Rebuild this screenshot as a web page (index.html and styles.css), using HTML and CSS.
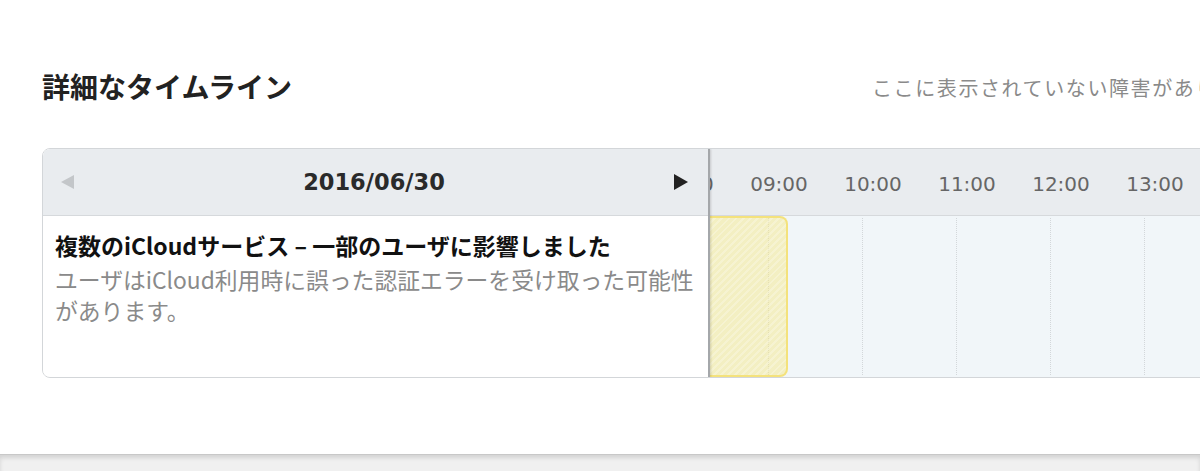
FILE: index.html
```html
<!DOCTYPE html>
<html lang="ja">
<head>
  <meta charset="UTF-8">
  <title>詳細なタイムライン</title>
  <link rel="stylesheet" href="styles.css">
</head>
<body>

  <div class="page">
    <div class="title-row">
      <h1>詳細なタイムライン</h1>
      <p class="note">ここに表示されていない障害がありますか？</p>
    </div>

    <div class="timeline-card">
      <div class="side">
        <div class="side-head">
          <svg class="nav prev" width="13" height="14" viewBox="0 0 13 14"><path d="M13 0 L13 14 L0 7 Z"/></svg>
          <span class="date">2016/06/30</span>
          <svg class="nav next" width="14" height="16" viewBox="0 0 14 16"><path d="M0 0 L0 16 L14 8 Z"/></svg>
        </div>
        <div class="event">
          <h3>複数のiCloudサービス – 一部のユーザに影響しました</h3>
          <p>ユーザはiCloud利用時に誤った認証エラーを受け取った可能性があります。</p>
        </div>
      </div>

      <div class="hours">
        <div class="hours-head">
          <span>08:00</span>
          <span>09:00</span>
          <span>10:00</span>
          <span>11:00</span>
          <span>12:00</span>
          <span>13:00</span>
          <span>14:00</span>
        </div>
        <div class="hours-body">
          <div class="slot first"></div>
          <div class="slot"></div>
          <div class="slot"></div>
          <div class="slot"></div>
          <div class="slot"></div>
          <div class="slot"></div>
          <div class="outage"></div>
        </div>
      </div>
    </div>
  </div>

  <div class="footer"></div>

</body>
</html>
```

FILE: styles.css
```css
html, body {
  margin: 0;
  overflow: hidden;
}

body {
  font-family: "Noto Sans CJK JP", "Noto Sans", sans-serif;
  background-color: #f0f0f0;
  color: #222;
}

.page {
  background-color: #fff;
  height: 454px;
  width: 1500px;
  padding: 66px 0 0 42px;
  box-sizing: border-box;
}

.title-row {
  display: grid;
  grid-template-columns: 830px auto;
  align-items: center;
  height: 40px;
  margin-bottom: 42px;
}

h1 {
  margin: 0;
  font-size: 28px;
  font-weight: bold;
  line-height: 40px;
  color: #222;
}

.note {
  margin: 3px 0 0 0;
  font-size: 20px;
  letter-spacing: 1.6px;
  color: #8a8a8a;
  white-space: nowrap;
}

.timeline-card {
  display: flex;
  width: 1400px;
  height: 228px;
  border: 1px solid #d3d6d9;
  border-radius: 8px;
  overflow: hidden;
}

.side {
  width: 665px;
  flex-shrink: 0;
  border-right: 2px solid #a4a7aa;
  box-shadow: 1px 0 2px rgba(0, 0, 0, 0.15);
  position: relative;
  z-index: 1;
  background-color: #fff;
}

.side-head {
  height: 66px;
  background-color: #e9ecef;
  border-bottom: 1px solid #d6d9dc;
  display: flex;
  align-items: center;
  justify-content: space-between;
  padding: 0 20px 0 18px;
}

.nav.prev {
  fill: #c3c6c9;
}

.nav.next {
  fill: #222;
}

.date {
  font-family: "DejaVu Sans", sans-serif;
  font-size: 22.5px;
  font-weight: bold;
  color: #2a2a2a;
}

.event {
  padding: 14px 10px 0 12px;
}

.event h3 {
  margin: 0 0 4px 0;
  font-size: 23px;
  line-height: 30px;
  font-weight: bold;
  color: #111;
}

.event p {
  margin: 0;
  font-size: 22.8px;
  line-height: 31px;
  color: #8a8a8a;
}

.hours {
  flex: 1;
  overflow: hidden;
  display: flex;
  flex-direction: column;
}

.hours-head {
  height: 66px;
  flex-shrink: 0;
  background-color: #e9ecef;
  border-bottom: 1px solid #d6d9dc;
  display: flex;
  align-items: center;
  margin-left: -72px;
}

.hours-head span {
  width: 94px;
  flex-shrink: 0;
  text-align: center;
  font-family: "DejaVu Sans", sans-serif;
  font-size: 20px;
  color: #666;
  padding-top: 4px;
}

.hours-body {
  flex: 1;
  background-color: #f1f6f9;
  display: flex;
  position: relative;
  padding: 2px 0;
}

.slot {
  width: 94px;
  box-sizing: border-box;
  flex-shrink: 0;
  border-left: 1px dotted #d3d7da;
}

.slot.first {
  width: 58px;
  border-left: none;
}

.outage {
  position: absolute;
  left: 0;
  top: 0;
  bottom: 0;
  width: 76px;
  border: 2px solid #f4e27c;
  border-left: none;
  border-radius: 0 8px 8px 0;
  background-color: rgba(245, 232, 140, 0.5);
  background-image: repeating-linear-gradient(-45deg, rgba(255, 255, 255, 0.25) 0, rgba(255, 255, 255, 0.25) 2px, transparent 2px, transparent 5px);
}

.footer {
  height: 17px;
  background-color: #f0f0f0;
  border-top: 1px solid #c8c8c8;
  box-shadow: inset 0 3px 4px rgba(0, 0, 0, 0.12);
}
```
